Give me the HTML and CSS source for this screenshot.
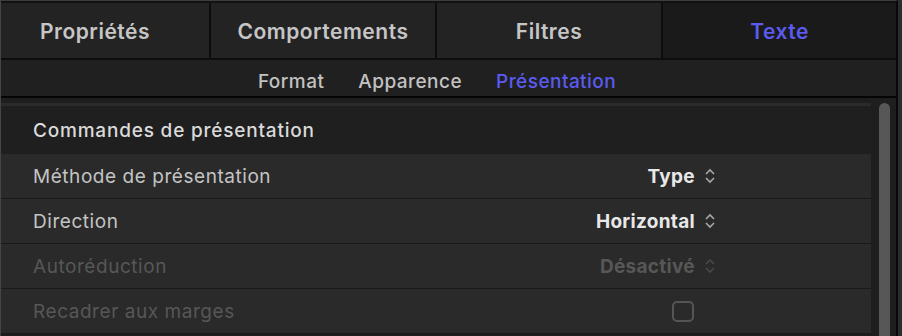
FILE: index.html
```html
<!DOCTYPE html>
<html lang="fr">
<head>
  <meta charset="UTF-8" />
  <title>Inspecteur - Texte</title>
  <link rel="stylesheet" href="styles.css">
</head>
<body>
  <div class="panel">
    <nav class="tabs">
      <div class="tab first">Propriétés</div>
      <div class="tab">Comportements</div>
      <div class="tab">Filtres</div>
      <div class="tab active">Texte</div>
    </nav>

    <div class="subtabs">
      <span class="subtab">Format</span>
      <span class="subtab">Apparence</span>
      <span class="subtab active">Présentation</span>
    </div>

    <div class="content">
      <div class="list">
        <div class="group-title">Commandes de présentation</div>

        <div class="row">
          <span class="label">Méthode de présentation</span>
          <span class="value">Type <svg class="stepper" viewBox="0 0 12 20"><path d="M2 8 L6 4 L10 8 M2 12 L6 16 L10 12" /></svg></span>
        </div>
        <div class="row">
          <span class="label">Direction</span>
          <span class="value">Horizontal <svg class="stepper" viewBox="0 0 12 20"><path d="M2 8 L6 4 L10 8 M2 12 L6 16 L10 12" /></svg></span>
        </div>
        <div class="row disabled">
          <span class="label">Autoréduction</span>
          <span class="value">Désactivé <svg class="stepper" viewBox="0 0 12 20"><path d="M2 8 L6 4 L10 8 M2 12 L6 16 L10 12" /></svg></span>
        </div>
        <div class="row disabled">
          <span class="label">Recadrer aux marges</span>
          <span class="value"><span class="checkbox"></span><span class="stepper-space"></span></span>
        </div>
      </div>
      <div class="scroll">
        <div class="thumb"></div>
      </div>
    </div>
  </div>
</body>
</html>
```

FILE: styles.css
```css
:root {
  --tab-bg: #232323;
  --tab-active: #1a1a1a;
  --line: #0d0d0d;
  --accent: #5b5bef;
  --row-bg: #2a2a2a;
  --text: #c4c4c4;
  --dim: #575757;
}

* {
  box-sizing: border-box;
}

body {
  margin: 0;
  width: 902px;
  height: 336px;
  overflow: hidden;
  background: #2c2c2c;
  font-family: 'Inter', 'Roboto', sans-serif;
  color: var(--text);
}

.panel {
  width: 898px;
  height: 336px;
  border-top: 1px solid #3d3d3d;
  border-left: 1px solid #454545;
  border-right: 2px solid #080808;
  background: #1e1e1e;
  display: flex;
  flex-direction: column;
}

.tabs {
  display: grid;
  grid-template-columns: 208px 224px 224px 1fr;
  gap: 2px;
  background: var(--line);
  border-top: 2px solid #121212;
  border-bottom: 2px solid var(--line);
  height: 59px;
}

.tab {
  background: var(--tab-bg);
  display: flex;
  align-items: center;
  justify-content: center;
  padding-top: 2px;
  font-size: 21px;
  font-weight: 600;
  letter-spacing: 0.5px;
  color: #c6c6c6;
}

.tab.first {
  padding-right: 20px;
}

.tab.active {
  background: var(--tab-active);
  color: var(--accent);
}

.subtabs {
  height: 38px;
  background: #202020;
  border-bottom: 2px solid #050505;
  display: flex;
  align-items: center;
  justify-content: center;
  gap: 34px;
  padding: 6px 23px 0 0;
}

.subtab {
  font-size: 19px;
  font-weight: 500;
  letter-spacing: 0.45px;
  color: #c2c2c2;
}

.subtab.active {
  color: var(--accent);
}

.content {
  flex: 1;
  display: flex;
  min-height: 0;
  overflow: hidden;
}

.list {
  flex: 1;
  padding-top: 5px;
}

.group-title {
  border-top: 3px solid #2b2b2b;
  height: 51px;
  display: flex;
  align-items: center;
  padding-left: 32px;
  font-size: 19px;
  font-weight: 500;
  letter-spacing: 0.8px;
  color: #dadada;
  background: #1f1f1f;
}

.row {
  height: 45px;
  background: var(--row-bg);
  border-bottom: 1px solid #1a1a1a;
  display: flex;
  align-items: center;
  justify-content: space-between;
  padding: 0 155px 0 32px;
  font-size: 19px;
  letter-spacing: 0.55px;
}

.value {
  display: flex;
  align-items: center;
  gap: 9px;
  font-weight: 700;
  letter-spacing: 0.3px;
  color: #e8e8e8;
}

.stepper {
  width: 12px;
  height: 20px;
  fill: none;
  stroke: #a8a8a8;
  stroke-width: 1.6;
}

.stepper-space {
  width: 12px;
}

.row.disabled .label,
.row.disabled .value {
  color: var(--dim);
}

.row.disabled .stepper {
  stroke: #484848;
}

.checkbox {
  width: 22px;
  height: 21px;
  border: 2px solid #555;
  border-radius: 5px;
  margin-right: 1px;
}

.scroll {
  width: 25px;
  background: #1e1e1e;
  padding: 5px 6px 0 8px;
}

.thumb {
  height: 260px;
  background: #575757;
  border-radius: 6px;
}
```
